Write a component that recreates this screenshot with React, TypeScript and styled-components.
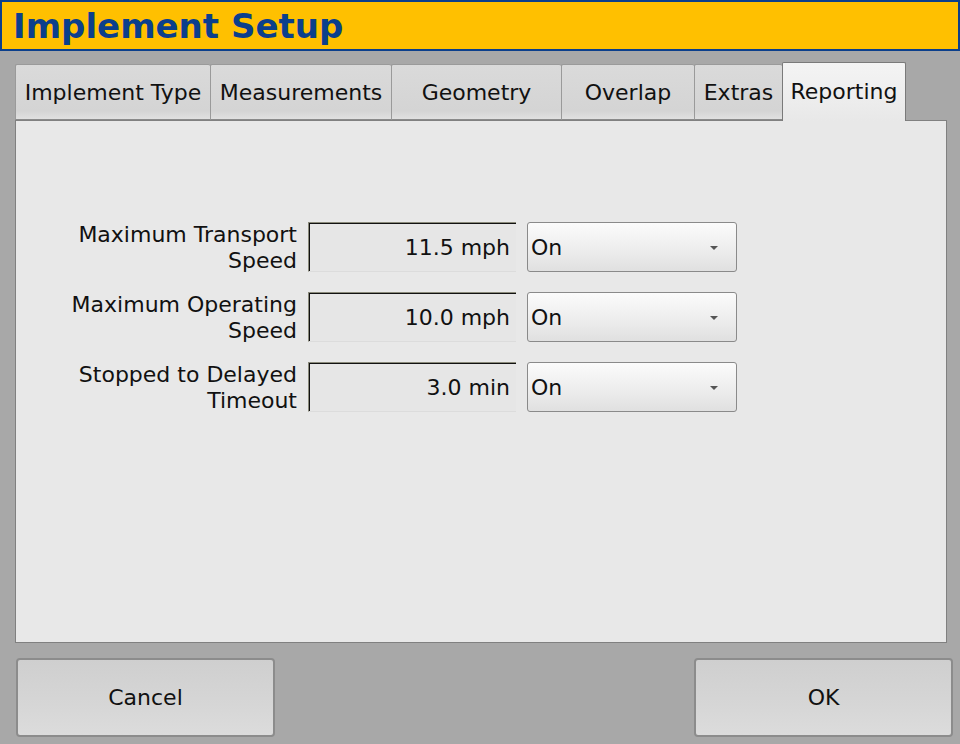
import React, { useState } from "react";
import styled, { createGlobalStyle } from "styled-components";

const GlobalStyle = createGlobalStyle`
  html, body {
    margin: 0;
    padding: 0;
    background: #a8a8a8;
    font-family: "DejaVu Sans", "Liberation Sans", sans-serif;
  }
`;

const tabs = [
  { name: "Implement Type", width: 195 },
  { name: "Measurements", width: 181 },
  { name: "Geometry", width: 170 },
  { name: "Overlap", width: 133 },
  { name: "Extras", width: 88 },
  { name: "Reporting", width: 124 },
];

const rows = [
  { label: ["Maximum Transport", "Speed"], value: "11.5 mph", mode: "On" },
  { label: ["Maximum Operating", "Speed"], value: "10.0 mph", mode: "On" },
  { label: ["Stopped to Delayed", "Timeout"], value: "3.0 min", mode: "On" },
];

export default function App() {
  const [active, setActive] = useState("Reporting");

  return (
    <Screen>
      <GlobalStyle />
      <Header>
        <Title>Implement Setup</Title>
      </Header>

      <Body>
        <TabBar>
          {tabs.map((t) => (
            <Tab
              key={t.name}
              $width={t.width}
              $active={t.name === active}
              onClick={() => setActive(t.name)}
            >
              {t.name}
            </Tab>
          ))}
        </TabBar>

        <Panel>
          <Form>
            {rows.map((r) => (
              <React.Fragment key={r.value}>
                <Label>
                  {r.label[0]}
                  <br />
                  {r.label[1]}
                </Label>
                <ValueBox>{r.value}</ValueBox>
                <Select>
                  <span>{r.mode}</span>
                  <Arrow />
                </Select>
              </React.Fragment>
            ))}
          </Form>
        </Panel>

        <Footer>
          <Button>Cancel</Button>
          <Button>OK</Button>
        </Footer>
      </Body>
    </Screen>
  );
}

const Screen = styled.div`
  width: 960px;
  height: 744px;
  display: flex;
  flex-direction: column;
  background: #a8a8a8;
  overflow: hidden;
`;

const Header = styled.div`
  height: 47px;
  background: #ffc000;
  border: 2px solid #0b3f8c;
  display: flex;
  align-items: center;
  padding-left: 11px;
`;

const Title = styled.h1`
  margin: 0;
  font-size: 34px;
  font-weight: bold;
  color: #0b3f8c;
  padding-top: 1px;
`;

const Body = styled.div`
  display: flex;
  flex-direction: column;
  padding: 11px 0 0 15px;
`;

const TabBar = styled.div`
  display: flex;
  align-items: flex-end;
  height: 58px;
  position: relative;
  z-index: 1;
`;

const Tab = styled.div<{ $width: number; $active?: boolean }>`
  box-sizing: border-box;
  width: ${(p) => p.$width}px;
  height: ${(p) => (p.$active ? 59 : 56)}px;
  margin-bottom: ${(p) => (p.$active ? -1 : 0)}px;
  display: flex;
  align-items: center;
  justify-content: center;
  padding-top: ${(p) => (p.$active ? 0 : 1)}px;
  padding-bottom: ${(p) => (p.$active ? 2 : 0)}px;
  font-size: 22px;
  white-space: nowrap;
  color: #111;
  cursor: pointer;
  border: 1px solid ${(p) => (p.$active ? "#7a7a7a" : "#9a9a9a")};
  border-right: ${(p) => (p.$active ? "1px solid #7a7a7a" : "none")};
  border-bottom: ${(p) => (p.$active ? "none" : "1px solid #8a8a8a")};
  border-radius: 2px 2px 0 0;
  background: ${(p) =>
    p.$active
      ? "linear-gradient(#f4f4f4, #ececec 70%, #e8e8e8)"
      : "linear-gradient(#dadada, #d4d4d4 85%, #e0e0e0)"};
`;

const Panel = styled.div`
  box-sizing: border-box;
  width: 932px;
  height: 523px;
  background: #e8e8e8;
  border: 1px solid #808080;
  padding-top: 101px;
`;

const Form = styled.div`
  display: grid;
  grid-template-columns: 281px 208px 210px;
  grid-auto-rows: 50px;
  column-gap: 11px;
  row-gap: 20px;
`;

const Label = styled.div`
  text-align: right;
  font-size: 22px;
  line-height: 26px;
  white-space: nowrap;
  color: #111;
  align-self: center;
  padding-top: 1px;
`;

const ValueBox = styled.div`
  box-sizing: border-box;
  display: flex;
  align-items: center;
  justify-content: flex-end;
  padding-right: 6px;
  padding-top: 1px;
  font-size: 22px;
  color: #111;
  background: #e6e6e6;
  border-top: 1px solid #8a8a7a;
  border-left: 1px solid #8a8a7a;
  border-bottom: 1px solid #dcdcdc;
  box-shadow: inset 1px 1px 0 #111;
`;

const Select = styled.div`
  box-sizing: border-box;
  display: flex;
  align-items: center;
  justify-content: space-between;
  padding: 1px 18px 0 3px;
  font-size: 22px;
  color: #111;
  border: 1px solid #8a8a8a;
  border-radius: 3px;
  background: linear-gradient(#fbfbfb, #ececec 60%, #e0e0e0);
`;

const Arrow = styled.span`
  width: 0;
  height: 0;
  border-left: 4px solid transparent;
  border-right: 4px solid transparent;
  border-top: 4px solid #555;
  margin-top: 1px;
`;

const Footer = styled.div`
  display: flex;
  justify-content: space-between;
  width: 938px;
  margin-top: 15px;
`;

const Button = styled.button`
  box-sizing: border-box;
  width: 259px;
  height: 79px;
  margin-left: 1px;
  font-family: "DejaVu Sans", "Liberation Sans", sans-serif;
  font-size: 22px;
  color: #111;
  border: 2px solid #8c8c8c;
  border-radius: 4px;
  background: linear-gradient(#cfcfcf, #d6d6d6 60%, #dcdcdc);
  cursor: pointer;
  padding: 0 0 1px 0;
`;
